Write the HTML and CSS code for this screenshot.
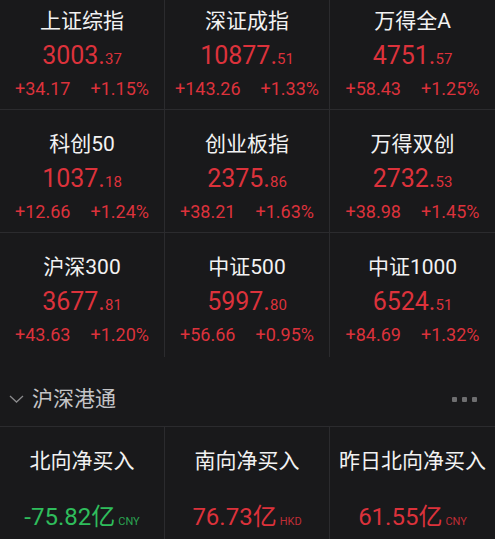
FILE: index.html
```html
<!DOCTYPE html>
<html lang="zh-CN">
<head>
  <meta charset="UTF-8">
  <title>行情概览</title>
  <link rel="stylesheet" href="styles.css">
</head>
<body>
  <div class="index-grid">
    <div class="cell">
      <div class="name">上证综指</div>
      <div class="price">3003.<small>37</small></div>
      <div class="change"><span>+34.17</span><span>+1.15%</span></div>
    </div>
    <div class="cell">
      <div class="name">深证成指</div>
      <div class="price">10877.<small>51</small></div>
      <div class="change"><span>+143.26</span><span>+1.33%</span></div>
    </div>
    <div class="cell">
      <div class="name">万得全A</div>
      <div class="price">4751.<small>57</small></div>
      <div class="change"><span>+58.43</span><span>+1.25%</span></div>
    </div>

    <div class="cell">
      <div class="name">科创50</div>
      <div class="price">1037.<small>18</small></div>
      <div class="change"><span>+12.66</span><span>+1.24%</span></div>
    </div>
    <div class="cell">
      <div class="name">创业板指</div>
      <div class="price">2375.<small>86</small></div>
      <div class="change"><span>+38.21</span><span>+1.63%</span></div>
    </div>
    <div class="cell">
      <div class="name">万得双创</div>
      <div class="price">2732.<small>53</small></div>
      <div class="change"><span>+38.98</span><span>+1.45%</span></div>
    </div>

    <div class="cell">
      <div class="name">沪深300</div>
      <div class="price">3677.<small>81</small></div>
      <div class="change"><span>+43.63</span><span>+1.20%</span></div>
    </div>
    <div class="cell">
      <div class="name">中证500</div>
      <div class="price">5997.<small>80</small></div>
      <div class="change"><span>+56.66</span><span>+0.95%</span></div>
    </div>
    <div class="cell">
      <div class="name">中证1000</div>
      <div class="price">6524.<small>51</small></div>
      <div class="change"><span>+84.69</span><span>+1.32%</span></div>
    </div>
  </div>

  <div class="section-head">
    <svg class="chevron" width="15" height="8" viewBox="0 0 15 8">
      <polyline points="1,1 7.5,7 14,1" fill="none" stroke="#8a8a8c" stroke-width="1.3"/>
    </svg>
    <span class="section-title">沪深港通</span>
    <div class="dots"><i></i><i></i><i></i></div>
  </div>

  <div class="flow-grid">
    <div class="flow">
      <div class="name">北向净买入</div>
      <div class="amount down">-75.82亿<small>CNY</small></div>
    </div>
    <div class="flow">
      <div class="name">南向净买入</div>
      <div class="amount up">76.73亿<small>HKD</small></div>
    </div>
    <div class="flow">
      <div class="name">昨日北向净买入</div>
      <div class="amount up">61.55亿<small>CNY</small></div>
    </div>
  </div>
</body>
</html>
```

FILE: styles.css
```css
body {
  margin: 0;
  background: #19191b;
  color: #f2f2f2;
  font-family: Roboto, "Noto Sans CJK SC", sans-serif;
  overflow: hidden;
}

/* index cards */
.index-grid {
  display: grid;
  grid-template-columns: repeat(3, 1fr);
  margin-top: -13px;
}

.cell {
  height: 123px;
  text-align: center;
  border-right: 1px solid #2b2b2e;
  border-bottom: 1px solid #2b2b2e;
  box-sizing: border-box;
}

.cell:nth-child(3n) {
  border-right: none;
}

.cell:nth-child(n+7) {
  border-bottom: none;
  height: 124px;
}

.name {
  padding-top: 20px;
  font-size: 21px;
  line-height: 28px;
  white-space: nowrap;
}

.price {
  margin-top: 6px;
  font-size: 25px;
  line-height: 30px;
  color: #dc323b;
}

.price small {
  font-size: 15px;
}

.change {
  margin-top: 3px;
  display: flex;
  justify-content: center;
  gap: 20px;
  font-size: 18px;
  line-height: 24px;
  color: #dc323b;
}

/* section header */
.section-head {
  display: flex;
  align-items: center;
  height: 70px;
  padding: 15px 18px 0 9px;
  box-sizing: border-box;
  border-bottom: 1px solid #2b2b2e;
}

.chevron {
  margin-right: 8px;
}

.section-title {
  font-size: 21px;
  line-height: 28px;
  color: #c4c4c6;
}

.dots {
  margin-left: auto;
  display: flex;
  gap: 5px;
}

.dots i {
  width: 5px;
  height: 5px;
  border-radius: 1px;
  background: #6e6e70;
}

/* connect flows */
.flow-grid {
  display: grid;
  grid-template-columns: repeat(3, 1fr);
}

.flow {
  height: 120px;
  text-align: center;
  border-right: 1px solid #2b2b2e;
  box-sizing: border-box;
}

.flow:last-child {
  border-right: none;
}

.amount {
  margin-top: 27px;
  font-size: 24px;
  line-height: 30px;
}

.amount small {
  margin-left: 3px;
  font-size: 11px;
  opacity: 0.85;
}

.up {
  color: #dc323b;
}

.down {
  color: #2fbd5c;
}
```
